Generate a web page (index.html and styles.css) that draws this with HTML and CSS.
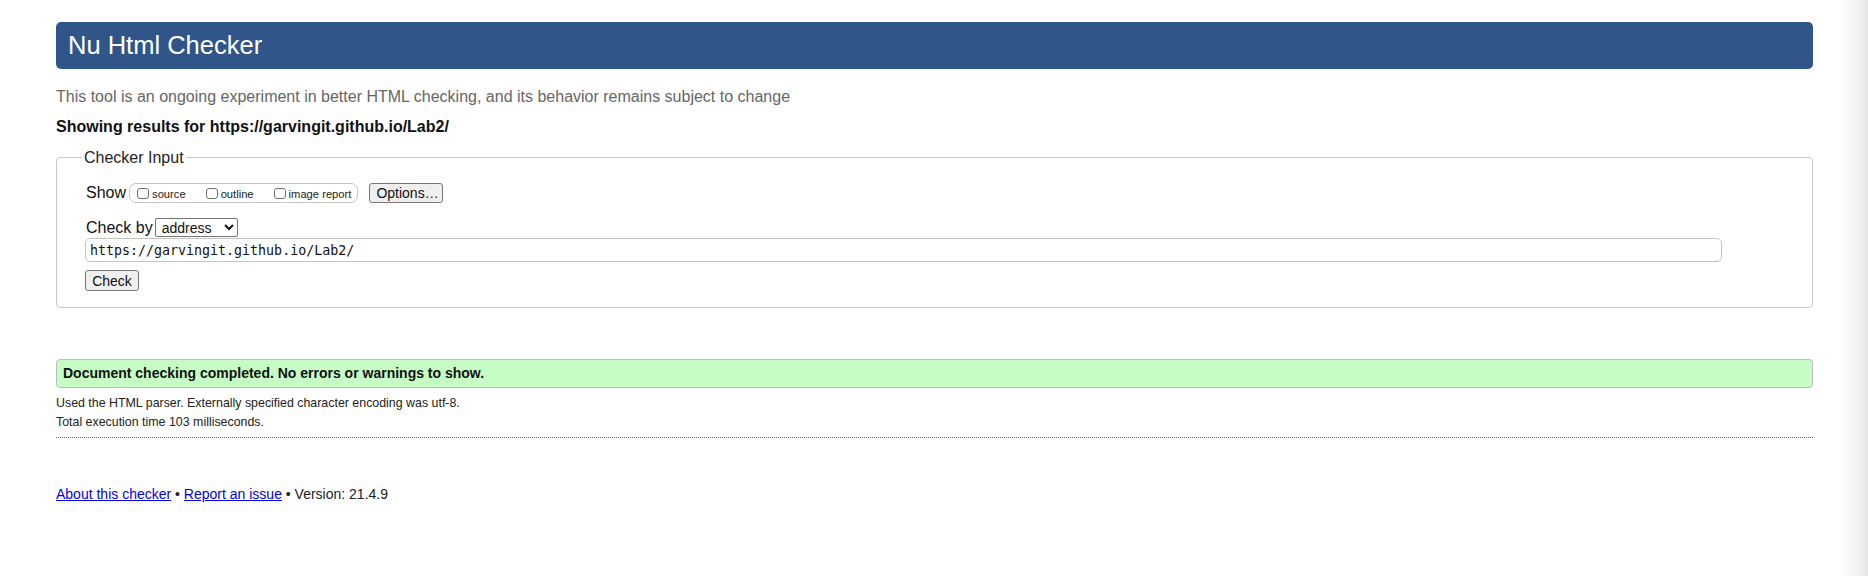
FILE: index.html
```html
<!DOCTYPE html>
<html lang="en">
<head>
<meta charset="utf-8">
<title>Showing results for https://garvingit.github.io/Lab2/ - Nu Html Checker</title>
<link rel="stylesheet" href="styles.css">
</head>
<body>
<div class="page">
  <h1 class="banner">Nu Html Checker</h1>
  <p class="intro">This tool is an ongoing experiment in better HTML checking, and its behavior remains subject to change</p>
  <p class="results">Showing results for https://garvingit.github.io/Lab2/</p>

  <fieldset class="checker">
    <legend class="checker-legend">Checker Input</legend>
    <div class="row row-show">
      <span class="label">Show</span>
      <span class="show-group">
        <label class="opt"><input type="checkbox" class="cb"><span>source</span></label>
        <label class="opt"><input type="checkbox" class="cb"><span>outline</span></label>
        <label class="opt"><input type="checkbox" class="cb"><span>image report</span></label>
      </span>
      <button type="button" class="btn btn-options">Options…</button>
    </div>
    <div class="row row-by">
      <span class="label">Check by</span>
      <select class="sel"><option>address</option></select>
    </div>
    <div class="row row-url">
      <input type="text" class="url" value="https://garvingit.github.io/Lab2/">
    </div>
    <div class="row row-check">
      <button type="button" class="btn btn-check">Check</button>
    </div>
  </fieldset>

  <p class="success">Document checking completed. No errors or warnings to show.</p>
  <div class="details">
    <p class="detail">Used the HTML parser. Externally specified character encoding was utf-8.</p>
    <p class="detail">Total execution time 103 milliseconds.</p>
  </div>

  <p class="footer"><a href="#" class="link">About this checker</a> • <a href="#" class="link">Report an issue</a> • Version: 21.4.9</p>
</div>
</body>
</html>
```

FILE: styles.css
```css
html {
  background: linear-gradient(to right, #ffffff calc(100% - 30px), #f5f5f5 calc(100% - 12px), #e3e3e3 100%);
  min-height: 100%;
}
body {
  margin: 0;
  font-family: "Liberation Sans", Arial, Helvetica, sans-serif;
  color: #111;
}
.page {
  padding: 22px 55px 0 56px;
}
.banner {
  margin: 0;
  height: 47px;
  line-height: 47px;
  padding: 0 12px;
  background: #305589;
  color: #fff;
  font-weight: normal;
  font-size: 25.5px;
  border-radius: 5px;
}
.intro {
  margin: 18px 0 0;
  font-size: 16px;
  line-height: 19px;
  color: #666;
}
.results {
  margin: 11px 0 0;
  font-size: 16px;
  line-height: 19px;
  font-weight: bold;
  color: #111;
}
.checker {
  margin: 12px 0 0;
  border: 1px solid #c8c8c8;
  border-radius: 4px;
  padding: 0 24px 16px 28px;
  min-width: 0;
}
.checker-legend {
  font-size: 16px;
  line-height: 19px;
  padding: 0 2px;
  margin-left: -3px;
  color: #222;
}
.row {
  display: flex;
  align-items: center;
}
.row-show {
  margin-top: 16px;
  height: 20px;
}
.label {
  margin-left: 1px;
  font-size: 16px;
  color: #111;
}
.show-group {
  display: inline-flex;
  align-items: center;
  height: 18px;
  margin-left: 3px;
  border: 1px solid #c4c4c4;
  border-radius: 7px;
  padding: 0 6px 0 7px;
  gap: 20px;
}
.opt {
  display: inline-flex;
  align-items: center;
  font-size: 11.2px;
  color: #222;
}
.opt span {
  margin-left: 3px;
  padding-top: 2px;
}
.cb {
  appearance: none;
  -webkit-appearance: none;
  margin: 0;
  width: 12px;
  height: 11px;
  border: 1px solid #6f6f6f;
  border-radius: 3px;
  background: #fff;
  box-sizing: border-box;
}
.btn {
  font-family: "Liberation Sans", Arial, sans-serif;
  font-size: 14px;
  color: #111;
  background: #efefef;
  border: 1px solid #767676;
  border-radius: 3px;
  padding: 0 6px;
  box-sizing: border-box;
}
.btn-options {
  margin-left: 11px;
  width: 74px;
  height: 20px;
}
.row-by {
  margin-top: 15px;
  height: 19px;
}
.sel {
  margin-left: 2px;
  width: 83px;
  height: 19px;
  font-family: "Liberation Sans", Arial, sans-serif;
  font-size: 14px;
  color: #111;
  border: 1px solid #767676;
  border-radius: 2px;
  background: #fff;
  padding: 0 0 0 2px;
}
.row-url {
  margin-top: 1px;
}
.url {
  width: 1637px;
  height: 24px;
  box-sizing: border-box;
  border: 1px solid #c4c4c4;
  border-radius: 5px;
  padding: 0 4px;
  font-family: "DejaVu Sans Mono", "Liberation Mono", monospace;
  font-size: 13.3px;
  color: #111;
  background: #fff;
}
.row-check {
  margin-top: 8px;
}
.btn-check {
  width: 54px;
  height: 21px;
  padding: 0;
}
.success {
  margin: 51px 0 0;
  height: 29px;
  box-sizing: border-box;
  line-height: 27px;
  padding: 0 6px;
  background: #c5fdc5;
  border: 1px solid #bdbdbd;
  border-radius: 4px;
  font-size: 14px;
  font-weight: bold;
  color: #111;
}
.details {
  margin-top: 6px;
  padding-bottom: 5px;
  border-bottom: 1px dotted #666;
}
.detail {
  margin: 0;
  font-size: 12.4px;
  line-height: 19px;
  color: #222;
}
.footer {
  margin: 48px 0 0;
  font-size: 14px;
  line-height: 17px;
  color: #222;
}
.link {
  color: #0000ee;
}
```
